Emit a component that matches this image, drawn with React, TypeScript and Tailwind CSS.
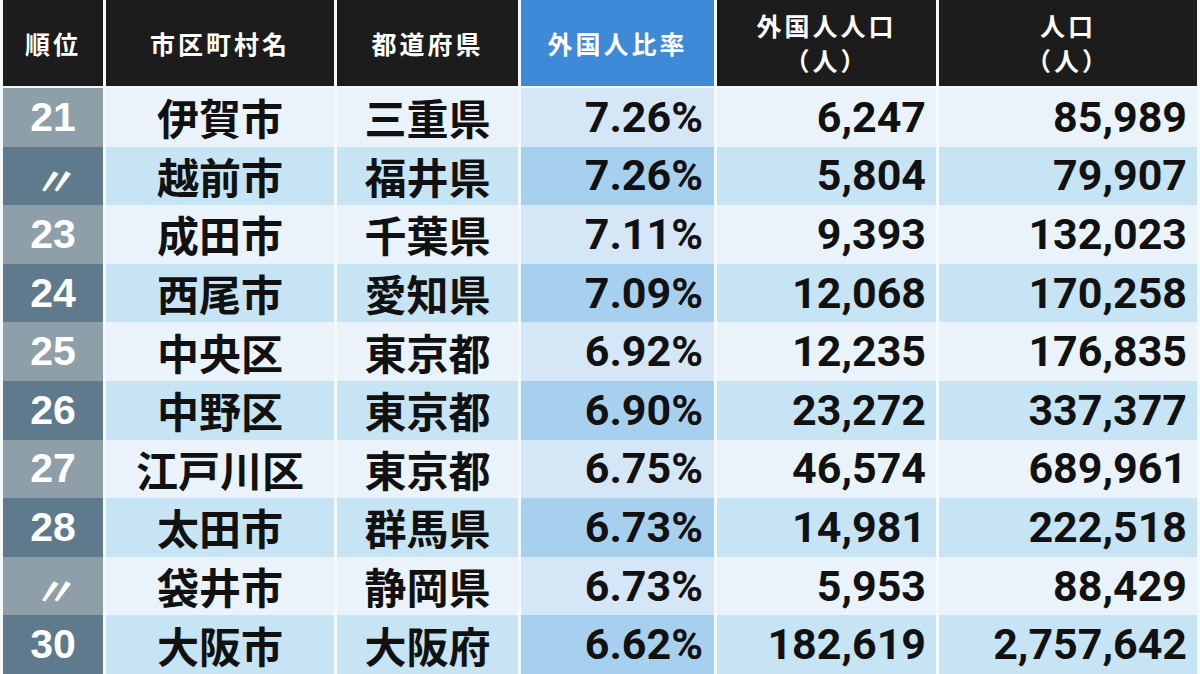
const rows = [
  { rank: "21", city: "伊賀市", pref: "三重県", rate: "7.26%", foreign: "6,247", pop: "85,989" },
  { rank: "〃", city: "越前市", pref: "福井県", rate: "7.26%", foreign: "5,804", pop: "79,907" },
  { rank: "23", city: "成田市", pref: "千葉県", rate: "7.11%", foreign: "9,393", pop: "132,023" },
  { rank: "24", city: "西尾市", pref: "愛知県", rate: "7.09%", foreign: "12,068", pop: "170,258" },
  { rank: "25", city: "中央区", pref: "東京都", rate: "6.92%", foreign: "12,235", pop: "176,835" },
  { rank: "26", city: "中野区", pref: "東京都", rate: "6.90%", foreign: "23,272", pop: "337,377" },
  { rank: "27", city: "江戸川区", pref: "東京都", rate: "6.75%", foreign: "46,574", pop: "689,961" },
  { rank: "28", city: "太田市", pref: "群馬県", rate: "6.73%", foreign: "14,981", pop: "222,518" },
  { rank: "〃", city: "袋井市", pref: "静岡県", rate: "6.73%", foreign: "5,953", pop: "88,429" },
  { rank: "30", city: "大阪市", pref: "大阪府", rate: "6.62%", foreign: "182,619", pop: "2,757,642" },
]

const cols = "grid grid-cols-[100px_228px_181px_193px_219px_258px] gap-x-[3px]"
const jp = "font-['Noto_Sans_CJK_JP','Noto_Sans',sans-serif]"
const num = "font-['Roboto','Liberation_Sans',sans-serif]"

function HeaderCell({ children, blue }: { children: React.ReactNode; blue?: boolean }) {
  return (
    <div
      className={`flex flex-col items-center justify-center text-[25px] font-bold leading-[35px] tracking-[3px] text-white ${jp} ${
        blue ? "bg-[#3e89d8]" : "bg-[#1c1c1c]"
      }`}
    >
      {children}
    </div>
  )
}

export default function App() {
  return (
    <div className="flex h-[674px] w-[1200px] flex-col overflow-hidden bg-[#f4f9fc] px-[3px]">
      <div className={`${cols} h-[86px] shrink-0`}>
        <HeaderCell>順位</HeaderCell>
        <HeaderCell>市区町村名</HeaderCell>
        <HeaderCell>都道府県</HeaderCell>
        <HeaderCell blue>外国人比率</HeaderCell>
        <HeaderCell>
          <span>外国人人口</span>
          <span>（人）</span>
        </HeaderCell>
        <HeaderCell>
          <span>人口</span>
          <span>（人）</span>
        </HeaderCell>
      </div>
      <div className={`${cols} mt-[2px] h-[586px] min-h-0 grid-rows-[repeat(10,minmax(0,1fr))] leading-none`}>
        {rows.map((r, i) => {
          const even = i % 2 === 1
          const light = even ? "bg-[#c6e4f4]" : "bg-[#eaf3fa]"
          return [
            <div
              key={`r${i}`}
              className={`flex items-center justify-center font-bold text-white ${
                even ? "bg-[#5f7a8c]" : "bg-[#8e9fa9]"
              }`}
            >
              {r.rank === "〃" ? (
                <span className={`translate-y-[3px] text-[40px] italic leading-[44px] ${jp}`}>〃</span>
              ) : (
                <span className="font-['Liberation_Sans',sans-serif] text-[41px] leading-none">{r.rank}</span>
              )}
            </div>,
            <div key={`c${i}`} className={`flex items-center justify-center text-[42px] font-bold leading-none text-[#111] ${jp} ${light}`}>
              {r.city}
            </div>,
            <div key={`p${i}`} className={`flex items-center justify-center text-[42px] font-bold leading-none text-[#111] ${jp} ${light}`}>
              {r.pref}
            </div>,
            <div
              key={`t${i}`}
              className={`flex items-center justify-end pr-[11px] text-[43px] font-bold leading-none text-[#111] ${num} ${
                even ? "bg-[#a7cfee]" : "bg-[#d5e7f6]"
              }`}
            >
              {r.rate}
            </div>,
            <div key={`f${i}`} className={`flex items-center justify-end pr-[10px] text-[43px] font-bold leading-none text-[#111] ${num} ${light}`}>
              {r.foreign}
            </div>,
            <div key={`n${i}`} className={`flex items-center justify-end pr-[10px] text-[43px] font-bold leading-none text-[#111] ${num} ${light}`}>
              {r.pop}
            </div>,
          ]
        })}
      </div>
    </div>
  )
}
